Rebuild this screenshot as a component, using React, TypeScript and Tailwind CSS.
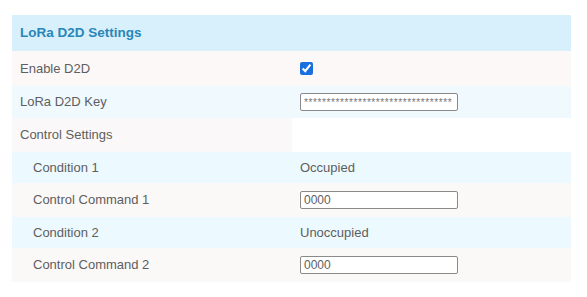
const rows = [
  { label: 'Enable D2D', kind: 'check', bg: 'bg-[#fcf8f8]', h: 'h-[35px]' },
  { label: 'LoRa D2D Key', kind: 'key', bg: 'bg-[#eff9fe]', h: 'h-[32px]' },
  { label: 'Control Settings', kind: 'none', bg: 'bg-[#faf8f8]', h: 'h-[34px]' },
  { label: 'Condition 1', kind: 'text', value: 'Occupied', bg: 'bg-[#ecf9fe]', h: 'h-[31px]', sub: true },
  { label: 'Control Command 1', kind: 'input', value: '0000', bg: 'bg-[#fbf8f8]', h: 'h-[34px]', sub: true },
  { label: 'Condition 2', kind: 'text', value: 'Unoccupied', bg: 'bg-[#ecf9fe]', h: 'h-[31px]', sub: true },
  { label: 'Control Command 2', kind: 'input', value: '0000', bg: 'bg-[#fbf8f8]', h: 'h-[34px]', sub: true },
];

const Field = ({ value, small }: { value: string; small?: boolean }) => (
  <input
    readOnly
    value={value}
    className={`w-[158px] h-[18px] border border-[#8a8a8a] rounded-[2px] bg-white px-[3px] outline-none ${small ? 'text-[10px] tracking-[0.6px] text-[#777]' : 'text-[12px] text-[#5e5e5e]'}`}
    style={{ fontFamily: '"Liberation Sans", Arial, sans-serif' }}
  />
);

export default function App() {
  return (
    <div className="w-[587px] h-[297px] bg-white pt-[15px] pl-[12px] font-['Liberation_Sans',Arial,sans-serif] text-[13px] text-[#5e5e5e]">
      <div className="w-[559px] flex flex-col">
        <div className="h-[36px] bg-[#d7f0fb] flex items-center pl-[8px]">
          <span className="font-bold text-[13.5px] text-[#2a86b9]">LoRa D2D Settings</span>
        </div>
        {rows.map((r) => (
          <div key={r.label} className={`${r.h} flex ${r.kind === 'none' ? '' : r.bg}`}>
            <div
              className={`w-[280px] flex items-center ${r.sub ? 'pl-[21px]' : 'pl-[8px]'} ${r.kind === 'none' ? r.bg : ''}`}
            >
              {r.label}
            </div>
            <div className="flex-1 flex items-center pl-[8px]">
              {r.kind === 'check' && (
                <input type="checkbox" defaultChecked className="w-[13px] h-[13px] m-0 accent-[#1a6fe0]" />
              )}
              {r.kind === 'key' && <Field value={'*'.repeat(33)} small />}
              {r.kind === 'text' && <span>{r.value}</span>}
              {r.kind === 'input' && <Field value={r.value ?? ''} />}
            </div>
          </div>
        ))}
      </div>
    </div>
  );
}
